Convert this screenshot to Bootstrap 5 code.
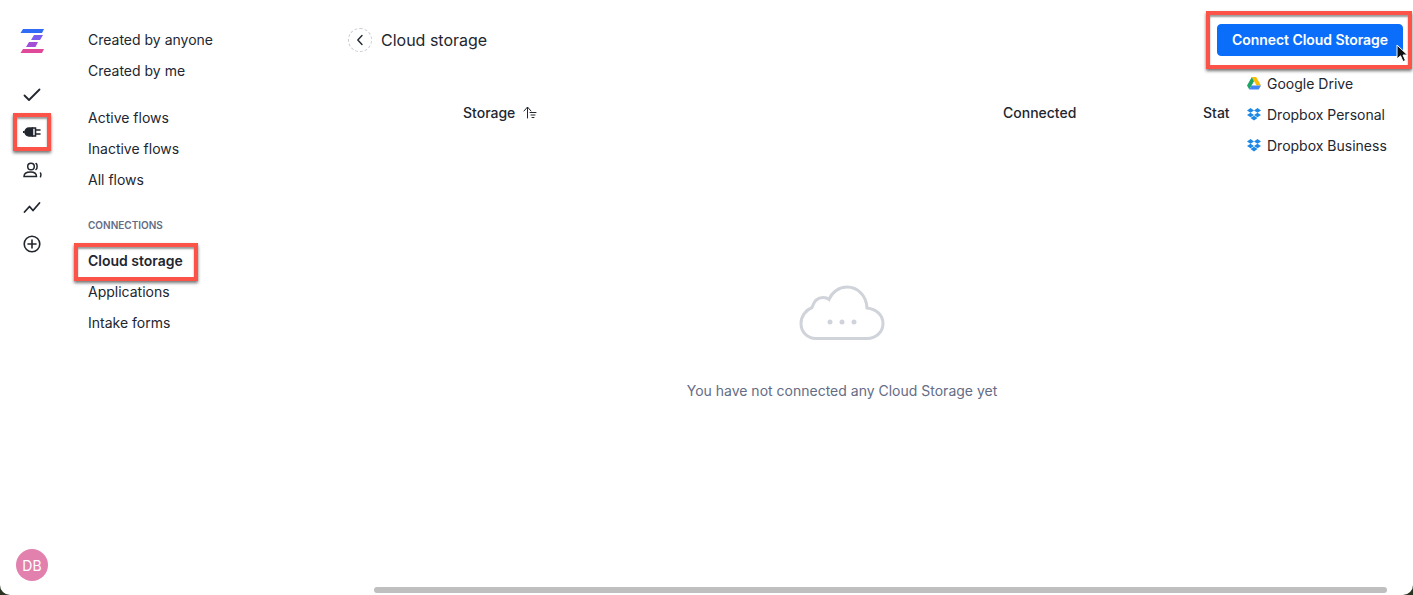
<!doctype html>
<html lang="en"><head><meta charset="utf-8"><title>Cloud storage</title>
<link href="https://cdn.jsdelivr.net/npm/bootstrap@5.3.0/dist/css/bootstrap.min.css" rel="stylesheet">
<style>
html,body{height:595px;overflow:hidden;background:#2a3320}
body{font-family:Inter,"Liberation Sans",sans-serif;color:#22262f;font-size:14px}
.app-shell{height:595px;width:1413px;background:#fff;border-radius:0 0 10px 10px;position:relative;overflow:hidden}
.icon-rail{width:64px;padding-top:28px}
.rail-logo{height:26px;margin-bottom:22px}
.rail-btn{width:32px;height:37px;display:flex;align-items:center;justify-content:center}
.rail-btn.marked{width:38px;height:38px;margin:0;border:4px solid #fb5348;box-shadow:0 2px 3px rgba(0,0,0,.55),inset 0 2px 2px rgba(0,0,0,.4)}
.rail-avatar{width:32px;height:32px;background:#e281ad;color:#fff;font-size:14px;margin-top:auto;margin-bottom:14px}
.side-nav{width:284px;padding:24px 0 0 24px}
.nav-entry{height:31px;line-height:31px}
.nav-gap{height:16px}
.nav-heading{font-size:10px;font-weight:600;color:#646c85;height:30px;line-height:29px;margin-top:16px;margin-bottom:4px}
.nav-active{font-weight:600;margin-left:-14px;width:124px;height:38px;line-height:28px;margin-top:-2px;margin-bottom:-5px;padding-left:10px;border:4px solid #fb5348;box-shadow:0 2px 3px rgba(0,0,0,.55),inset 0 2px 2px rgba(0,0,0,.4);white-space:nowrap}
.main-pane{min-width:0}
.top-bar{height:80px;padding-right:10px}
.back-circle{width:24px;height:24px;border:1px dashed #c9ccd4;margin-right:9px}
.page-title{font-size:16px}
.connect-wrap{border:4px solid #fb5348;box-shadow:0 2px 3px rgba(0,0,0,.55),inset 0 2px 2px rgba(0,0,0,.4);padding:9px 5px 9px 7px;width:206px;height:58px;margin-right:-9px;margin-top:-1px}
.connect-btn{--bs-btn-padding-y:0;--bs-btn-padding-x:0;--bs-btn-font-size:14px;--bs-btn-font-weight:600;--bs-btn-bg:#0b6efa;--bs-btn-border-color:#0b6efa;--bs-btn-border-radius:4px;width:186px;height:32px;white-space:nowrap;letter-spacing:-.05px}
.table-head{height:64px;font-weight:500;padding-left:115px}
.head-storage{width:540px}
.head-connected{width:200px}
.empty-state{margin-top:141px;padding-right:77px;color:#646c85}
.cloud-art{margin-bottom:39px}
.connect-menu{position:absolute;left:1247px;top:68px}
.menu-row{height:31px;white-space:nowrap}
.menu-row svg{margin-right:6px}
.fake-scroll{position:absolute;left:374px;top:587px;width:1013px;height:6px;background:#bfbfbf;border-radius:3px}
.mouse-arrow{position:absolute;left:1396px;top:44px}
</style></head><body>
<div class="app-shell d-flex">
  <aside class="icon-rail d-flex flex-column align-items-center">
    <div class="rail-logo">
      <svg width="26" height="26" viewBox="0 0 26 26"><path d="M4 1h21l-2 4H1.500z" fill="#2f6bf5"/><path d="M15 7h9l-3 5h-9z" fill="#7b5cf0"/><path d="M10 14h9l-2.500 5H7z" fill="#a34fd8"/><path d="M4 21h21l-2 4H1.500z" fill="#e0489a"/></svg>
    </div>
    <div class="rail-btn"><svg width="18" height="14" viewBox="0 0 18 14" fill="none" stroke="#22262f" stroke-width="1.800" stroke-linecap="round" stroke-linejoin="round"><path d="M1.500 7.500 6 12 16.500 1.500"/></svg></div>
    <div class="rail-btn marked"><svg width="18" height="12" viewBox="0 0 18 12" stroke="#22262f" stroke-linecap="round"><path d="M6 2h3.500v8H6A4 4 0 0 1 6 2z" fill="#22262f" stroke-width="1.500"/><path d="M1 6H.5" stroke-width="2" fill="none"/><path d="M9.500 2h3v8h-3M12.500 4H17M12.500 8H17" fill="none" stroke-width="1.600"/></svg></div>
    <div class="rail-btn"><svg width="19" height="16" viewBox="0 0 19 16" fill="none" stroke="#22262f" stroke-width="1.500" stroke-linecap="round"><circle cx="8" cy="4.500" r="3.300"/><path d="M1 14.500c0-3 3-4.500 6.500-4.500s6 1.500 6 4.500zM13 1.500c1.500.8 1.500 5 0 6M17.500 11c.5 1 .5 2.500 0 3.800"/></svg></div>
    <div class="rail-btn"><svg width="18" height="14" viewBox="0 0 18 14" fill="none" stroke="#22262f" stroke-width="1.800" stroke-linecap="round" stroke-linejoin="round"><path d="M1.500 12 6.500 6.500l3.500 4 6.500-7.500"/></svg></div>
    <div class="rail-btn"><svg width="18" height="18" viewBox="0 0 18 18" fill="none" stroke="#22262f" stroke-width="1.600" stroke-linecap="round"><circle cx="9" cy="9" r="7.800"/><path d="M9 5v8M5 9h8"/></svg></div>
    <div class="rail-avatar rounded-circle d-flex align-items-center justify-content-center">DB</div>
  </aside>
  <nav class="side-nav flex-shrink-0">
    <div class="nav-entry">Created by anyone</div>
    <div class="nav-entry">Created by me</div>
    <div class="nav-gap"></div>
    <div class="nav-entry">Active flows</div>
    <div class="nav-entry">Inactive flows</div>
    <div class="nav-entry">All flows</div>
    <div class="nav-heading">CONNECTIONS</div>
    <div class="nav-active">Cloud storage</div>
    <div class="nav-entry">Applications</div>
    <div class="nav-entry">Intake forms</div>
  </nav>
  <main class="main-pane flex-grow-1">
    <div class="top-bar d-flex align-items-center">
      <div class="back-circle rounded-circle d-flex align-items-center justify-content-center"><svg width="8" height="12" viewBox="0 0 8 12" fill="none" stroke="#22262f" stroke-width="1.400" stroke-linecap="round" stroke-linejoin="round"><path d="M6 1.500 1.800 6 6 10.500"/></svg></div>
      <div class="page-title">Cloud storage</div>
      <div class="connect-wrap ms-auto"><button class="btn btn-primary connect-btn">Connect Cloud Storage</button></div>
    </div>
    <div class="table-head d-flex align-items-center">
      <div class="head-storage d-flex align-items-center gap-2">Storage <svg width="14" height="13" viewBox="0 0 14 13" fill="none" stroke="#22262f" stroke-linecap="round" stroke-linejoin="round"><path d="M4.500 12V1.500M1 5l3.500-4L8 5M7 6.500h6M8 9h4M9 11.500h2"/></svg></div>
      <div class="head-connected">Connected</div>
      <div>Stat</div>
    </div>
    <div class="empty-state d-flex flex-column align-items-center">
      <svg class="cloud-art" width="86" height="56" viewBox="0 0 86 56" fill="none" stroke="#d0d3da" stroke-width="3"><path d="M17 53.500C8 53.500 2 46.500 2 38.500 2 31 7 25 13 22.500 15 16 19 12.500 24 12.500c2.500 0 4.500.6 6 2C33 7 40 2 48 2c11 0 19.500 9 20 21 9 1 16 7 16 15.500S77 53.500 68 53.500z"/><circle cx="31" cy="37" r="2.500" fill="#d0d3da" stroke="none"/><circle cx="43" cy="37" r="2.500" fill="#d0d3da" stroke="none"/><circle cx="55" cy="37" r="2.500" fill="#d0d3da" stroke="none"/></svg>
      <div>You have not connected any Cloud Storage yet</div>
    </div>
  </main>
  <div class="connect-menu">
    <div class="menu-row d-flex align-items-center"><svg width="14" height="13" viewBox="0 0 14 13"><path d="M4.800 0h4.400l4.800 8.500H9.500z" fill="#fbbc04"/><path d="M4.800 0 0 8.500l2.300 4L7 4.200z" fill="#1fa463"/><path d="M4.600 8.500H14l-2.300 4H2.300z" fill="#4285f4"/></svg>Google Drive</div>
    <div class="menu-row d-flex align-items-center"><svg width="14" height="13" viewBox="0 0 14 13" fill="#1e88e5"><path d="M3.500 0 0 2.400l3.500 2.300L7 2.400zM10.500 0 7 2.400l3.500 2.300L14 2.400zM0 7l3.500 2.300L7 7 3.500 4.700zM14 7l-3.500 2.300L7 7l3.500-2.300zM3.500 10.100 7 12.600l3.500-2.500L7 7.800z"/></svg>Dropbox Personal</div>
    <div class="menu-row d-flex align-items-center"><svg width="14" height="13" viewBox="0 0 14 13" fill="#1e88e5"><path d="M3.500 0 0 2.400l3.500 2.300L7 2.400zM10.500 0 7 2.400l3.500 2.300L14 2.400zM0 7l3.500 2.300L7 7 3.500 4.700zM14 7l-3.500 2.300L7 7l3.500-2.300zM3.500 10.100 7 12.600l3.500-2.500L7 7.800z"/></svg>Dropbox Business</div>
  </div>
  <svg class="mouse-arrow" width="12" height="19" viewBox="0 0 12 19"><path d="M1 1v14l3.500-3.200L7 17.500l2.500-1-2.500-5.500h4.500z" fill="#111" stroke="#fff" stroke-width="1"/></svg>
  <div class="fake-scroll"></div>
</div>
</body></html>
